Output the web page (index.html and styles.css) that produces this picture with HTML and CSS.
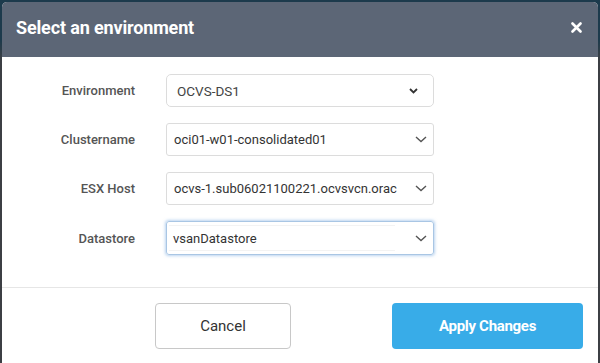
FILE: index.html
```html
<!DOCTYPE html>
<html>
<head>
<meta charset="utf-8">
<link rel="stylesheet" href="styles.css">
</head>
<body>
<div class="backdrop">
  <div class="modal">
    <div class="header">
      <h1 class="title">Select an environment</h1>
      <svg class="close" width="11" height="11" viewBox="0 0 11 11"><path d="M1.5 1.5 L9.5 9.5 M9.5 1.5 L1.5 9.5" stroke="#fff" stroke-width="2.6" stroke-linecap="round"/></svg>
    </div>
    <div class="body">
      <div class="row">
        <div class="label">Environment</div>
        <div class="select select-env">
          <span class="value">OCVS-DS1</span>
          <svg class="chev" width="9" height="6" viewBox="0 0 9 6"><path d="M1 1 L4.5 4.5 L8 1" fill="none" stroke="#333" stroke-width="1.8"/></svg>
        </div>
      </div>
      <div class="row">
        <div class="label">Clustername</div>
        <div class="select">
          <span class="value">oci01-w01-consolidated01</span>
          <svg class="chev" width="12" height="7" viewBox="0 0 12 7"><path d="M1 1 L6 5.5 L11 1" fill="none" stroke="#555" stroke-width="1.4"/></svg>
        </div>
      </div>
      <div class="row">
        <div class="label">ESX Host</div>
        <div class="select">
          <span class="value">ocvs-1.sub06021100221.ocvsvcn.orac</span>
          <svg class="chev" width="12" height="7" viewBox="0 0 12 7"><path d="M1 1 L6 5.5 L11 1" fill="none" stroke="#555" stroke-width="1.4"/></svg>
        </div>
      </div>
      <div class="row">
        <div class="label">Datastore</div>
        <div class="select select-focus">
          <span class="value value-hl">vsanDatastore</span>
          <svg class="chev" width="12" height="7" viewBox="0 0 12 7"><path d="M1 1 L6 5.5 L11 1" fill="none" stroke="#555" stroke-width="1.4"/></svg>
        </div>
      </div>
    </div>
    <div class="footer">
      <button class="btn btn-cancel">Cancel</button>
      <button class="btn btn-apply">Apply Changes</button>
    </div>
  </div>
</div>
</body>
</html>
```
FILE: styles.css
```css
html, body {
  margin: 0;
  padding: 0;
}
body {
  width: 600px;
  height: 363px;
  overflow: hidden;
  font-family: Roboto, "Liberation Sans", Arial, sans-serif;
  background: #3c3f44;
}
.backdrop {
  padding: 2px 2px 0 2px;
  background: linear-gradient(to bottom, #1c3a4c 0, #1c3a4c 40px, #3c3f44 60px);
  height: 361px;
}
.modal {
  background: #fff;
  border-radius: 5px 5px 0 0;
  overflow: hidden;
  height: 361px;
  width: 596px;
}
.header {
  height: 55px;
  background: #5c6676;
  display: flex;
  align-items: center;
  justify-content: space-between;
  padding: 0 16px 0 14px;
}
.title {
  margin: -4px 0 0 0;
  color: #fff;
  font-size: 18px;
  font-weight: 700;
  letter-spacing: -0.15px;
}
.close {
  margin-top: -4px;
}
.body {
  padding: 17px 0 32px 0;
  display: flex;
  flex-direction: column;
  gap: 16px;
  border-bottom: 1px solid #e6e6e6;
}
.row {
  display: flex;
  align-items: center;
}
.label {
  width: 133px;
  text-align: right;
  font-size: 13px;
  font-weight: 500;
  color: #555;
  margin-right: 31px;
}
.select {
  width: 268px;
  height: 33px;
  box-sizing: border-box;
  border: 1px solid #dcdcdc;
  border-radius: 3px;
  display: flex;
  align-items: center;
  justify-content: space-between;
  padding: 0 6px 0 7px;
  font-size: 13px;
  color: #333;
}
.select-env {
  border-radius: 5px;
  padding: 0 15px 0 10px;
  color: #444;
  font-size: 13.5px;
}
.select-focus {
  height: 34px;
  border-color: #a9c6e4;
  box-shadow: 0 0 3px 1px rgba(130, 175, 225, 0.55);
  padding-left: 2px;
}
.value-hl {
  flex: 1;
  align-self: stretch;
  margin: 3px 20px 3px 0;
  padding-left: 4px;
  display: flex;
  align-items: center;
  box-shadow: inset 0 1px 0 #f3f3f3, inset 0 -1px 0 #f3f3f3;
}
.footer {
  display: flex;
  align-items: center;
  padding: 15px 0 0 153px;
}
.btn {
  height: 46px;
  border-radius: 4px;
  font-family: inherit;
  font-size: 15px;
  cursor: pointer;
}
.btn-cancel {
  width: 136px;
  background: #fff;
  border: 1px solid #c8c8c8;
  color: #333;
  margin-right: 101px;
}
.btn-apply {
  width: 191px;
  background: #38ace8;
  border: none;
  color: #fff;
  font-weight: 700;
  letter-spacing: -0.3px;
}
```
